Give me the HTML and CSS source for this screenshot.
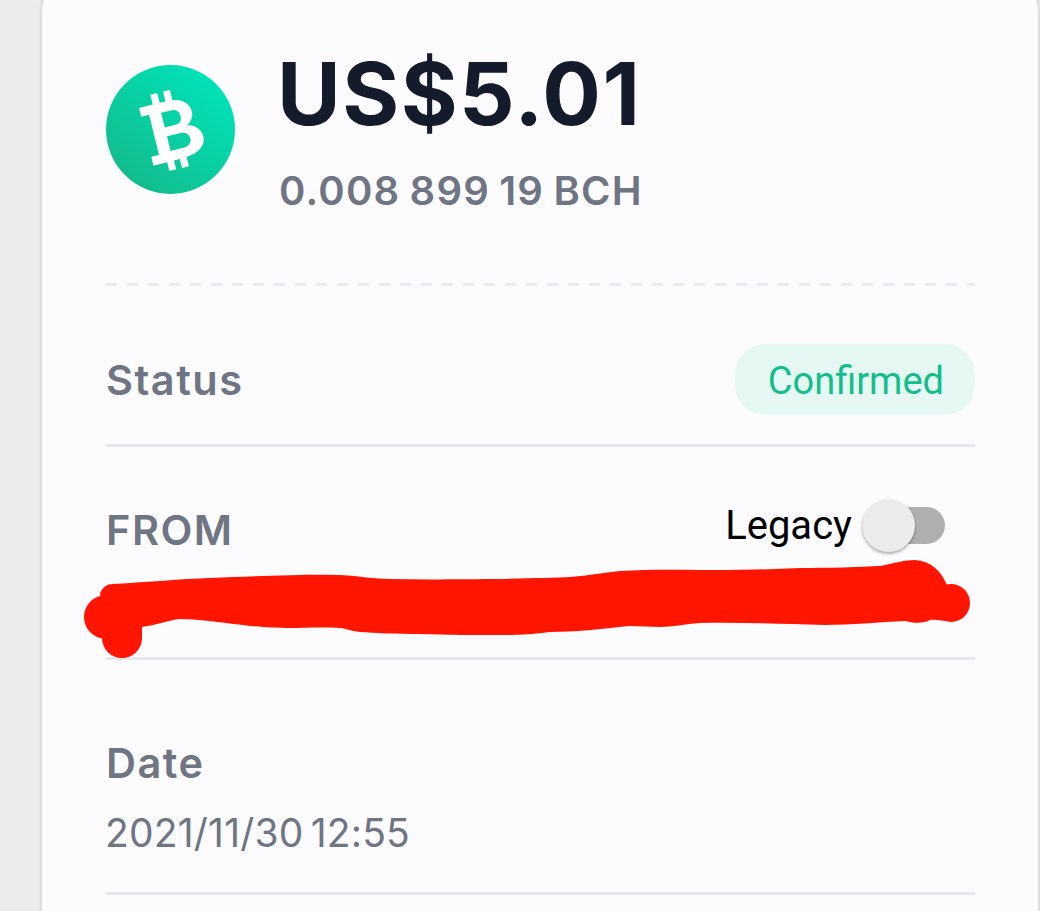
FILE: index.html
```html
<!DOCTYPE html>
<html lang="en">
<head>
  <meta charset="UTF-8">
  <title>Transaction</title>
  <link rel="stylesheet" href="styles.css">
</head>
<body>

  <div class="card">
    <div class="summary">
      <svg class="coin" viewBox="0 0 128 128">
        <defs>
          <linearGradient id="coinFill" x1="0.15" y1="0.9" x2="0.85" y2="0.1">
            <stop offset="0" stop-color="#12bb8c"/>
            <stop offset="1" stop-color="#00e3b8"/>
          </linearGradient>
        </defs>
        <circle cx="64" cy="64" r="64" fill="url(#coinFill)"/>
        <g transform="translate(67 64) rotate(-14)">
          <path fill="#fff" fill-rule="evenodd" d="M-28 -29H-14V-39H-7V-29H-1V-39H6V-28.500C16 -27 22 -21 22 -13C22 -7 18 -3 14 -1C22 1 27 7 27 14C27 23 18 29 6 29.500V39H-1V30H-7V39H-14V30H-28V21H-20V-20H-28ZM-8 -19V-4H3C8 -4 10 -7 10 -11.500C10 -16 7 -19 3 -19ZM-8 5V20H5C11 20 14 17 14 12.500C14 8 11 5 5 5Z"/>
        </g>
      </svg>
      <div class="amounts">
        <div class="fiat">US$5.01</div>
        <div class="crypto">0.008 899 19 BCH</div>
      </div>
    </div>

    <div class="dashed"></div>

    <div class="row status-row">
      <div class="label">Status</div>
      <div class="badge">Confirmed</div>
    </div>

    <div class="row from-row">
      <div class="from-head">
        <div class="label">FROM</div>
        <div class="legacy">
          <span>Legacy</span>
          <div class="switch"><div class="knob"></div></div>
        </div>
      </div>
      <svg class="scribble" viewBox="84 556 890 104">
        <path fill="#ff1500" d="M100 593C103 587 107 584 113 584C150 582 180 579 210 578C260 576 310 574 340 575C360 576 375 579 390 579C430 580 470 579 500 579C530 578 555 578 570 577C585 576 595 574 620 571C650 569 690 570 725 570C750 570 775 569 800 568C830 568 860 567 880 566C895 563 905 560 915 560C930 561 942 570 948 588L951 621C942 621 935 619 930 620C925 623 915 624 905 621C880 622 850 625 825 625C780 624 740 622 700 623C685 624 672 627 660 627C650 627 640 626 630 626C600 629 575 632 550 632C535 634 520 635 505 635C475 635 445 635 420 634C395 634 375 633 360 632C350 631 345 628 340 628C320 627 305 628 290 628C275 628 265 627 250 626C225 623 200 619 180 619C168 620 158 625 142 627L142 638L106 639Z"/>
        <circle cx="106" cy="617" r="22" fill="#ff1500"/>
        <circle cx="122" cy="638" r="20" fill="#ff1500"/>
        <circle cx="951" cy="603" r="19" fill="#ff1500"/>
      </svg>
    </div>

    <div class="row date-row">
      <div class="label">Date</div>
      <div class="value">2021/11/30 12:55</div>
    </div>
  </div>

</body>
</html>
```

FILE: styles.css
```css
html, body {
  height: 100%;
}

body {
  margin: 0;
  background: #ececee;
  font-family: Inter, "Noto Sans", sans-serif;
  overflow: hidden;
}

.card {
  background: #fcfcff;
  margin: -24px 2px 0 42px;
  padding: 62px 63px 0 64px;
  height: 900px;
  border-radius: 36px 36px 0 0;
  box-shadow: 0 0 5px rgba(0, 0, 0, 0.16);
}

.summary {
  display: flex;
  align-items: flex-start;
  height: 175px;
}

.coin {
  width: 129px;
  height: 129px;
  margin-top: 27px;
  margin-right: 44px;
}

.fiat {
  font-size: 87px;
  font-weight: 700;
  line-height: 108px;
  letter-spacing: 1.500px;
  margin: 2px 0 0 -2px;
  color: #141b2b;
}

.crypto {
  font-size: 40px;
  font-weight: 600;
  line-height: 44px;
  letter-spacing: 1.200px;
  word-spacing: -2px;
  margin-top: 21px;
  color: #6f7582;
}

.dashed {
  height: 3px;
  margin-top: 70px;
  background: repeating-linear-gradient(90deg, #e9eaef 0, #e9eaef 11px, transparent 11px, transparent 21px);
}

.row {
  border-bottom: 3px solid #e5e7ec;
  box-sizing: border-box;
}

.label {
  font-size: 41.500px;
  font-weight: 600;
  line-height: 46px;
  letter-spacing: 1.500px;
  color: #6f7582;
}

.status-row {
  display: flex;
  justify-content: space-between;
  align-items: center;
  height: 161px;
  padding-top: 28px;
}

.status-row .label {
  margin-top: 2px;
}

.badge {
  font-family: Roboto, sans-serif;
  font-size: 38px;
  line-height: 68px;
  padding: 3px 31px 0 33px;
  color: #12bf8c;
  background: #e6f8f3;
  border-radius: 30px;
}

.from-row {
  height: 213px;
  padding-top: 60px;
  position: relative;
}

.from-head {
  display: flex;
  justify-content: space-between;
  align-items: center;
}

.legacy {
  display: flex;
  align-items: center;
  font-family: Roboto, sans-serif;
  font-size: 40px;
  color: #000;
  margin: -10px 30px 0 0;
  gap: 10px;
}

.switch {
  width: 83px;
  height: 37px;
  background: #afafb1;
  border-radius: 19px;
  position: relative;
}

.knob {
  position: absolute;
  left: 0;
  top: -8px;
  width: 53px;
  height: 53px;
  border-radius: 50%;
  background: #ebebeb;
  box-shadow: 0 2px 3px rgba(0, 0, 0, 0.3);
}

.scribble {
  position: absolute;
  left: -22px;
  top: 109px;
  width: 890px;
  height: 104px;
}

.date-row {
  height: 235px;
  padding-top: 80px;
}

.value {
  font-size: 39px;
  line-height: 44px;
  letter-spacing: 0.200px;
  word-spacing: -4px;
  margin: 25px 0 0 -1px;
  color: #6f7582;
}
```
